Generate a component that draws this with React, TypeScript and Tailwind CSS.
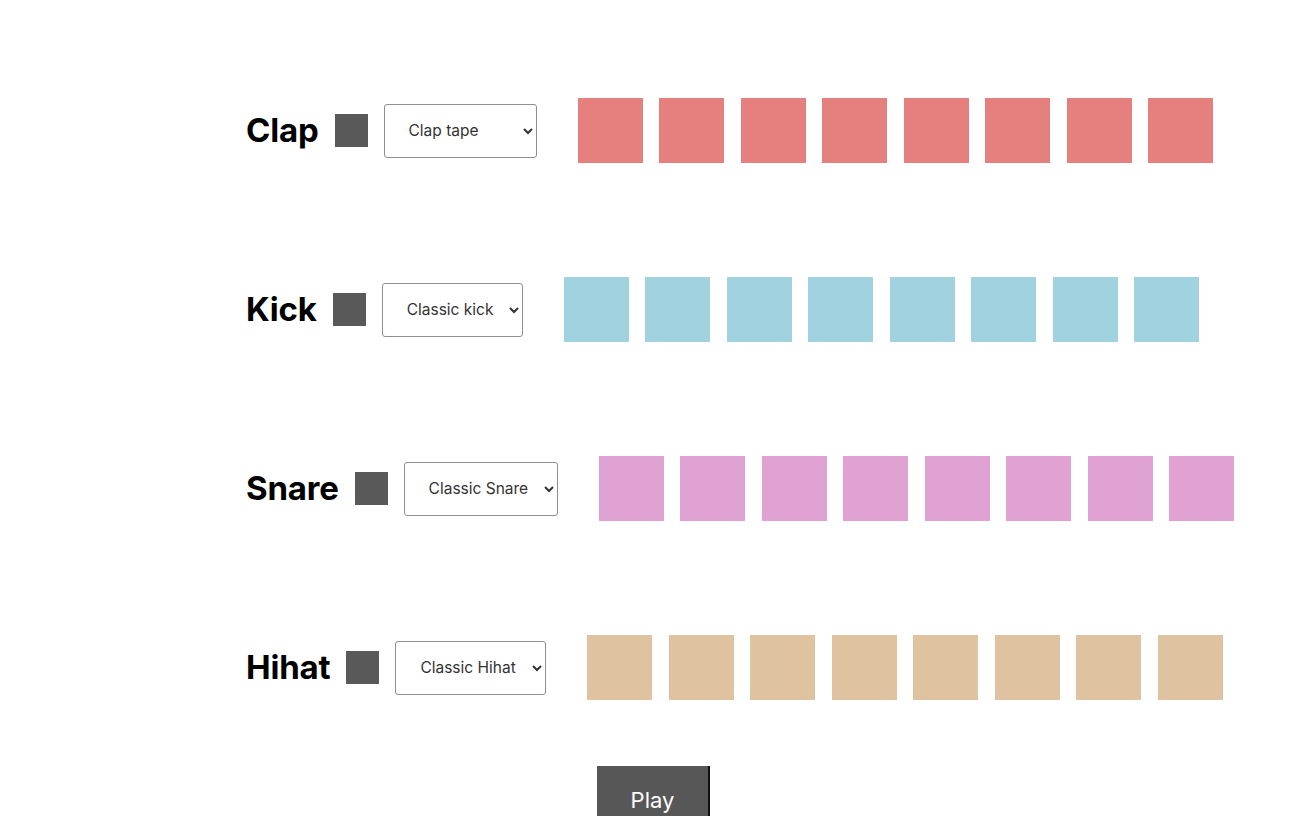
const tracks = [
  { name: 'Clap', sample: 'Clap tape', pad: 'bg-[#e6807f]', width: 'w-[153px]' },
  { name: 'Kick', sample: 'Classic kick', pad: 'bg-[#a0d3df]', width: 'w-[141px]' },
  { name: 'Snare', sample: 'Classic Snare', pad: 'bg-[#e0a2d3]', width: 'w-[154px]' },
  { name: 'Hihat', sample: 'Classic Hihat', pad: 'bg-[#dfc2a0]', width: 'w-[151px]' },
]

function Track({ name, sample, pad, width }: { name: string; sample: string; pad: string; width: string }) {
  return (
    <div className="flex items-center">
      <h2 className="text-[33px] font-bold tracking-[-0.2px] text-black leading-none">{name}</h2>
      <div className="w-[33px] h-[33px] bg-[#595959] ml-[16px]" />
      <select
        className={`ml-[16px] ${width} h-[54px] pl-[20px] pr-[10px] text-[15.5px] text-[#333] bg-white border border-[#8f8f8f] rounded-[3px]`}
        defaultValue={sample}
      >
        <option>{sample}</option>
      </select>
      <div className="flex gap-[16.5px] ml-[41px]">
        {Array.from({ length: 8 }).map((_, i) => (
          <div key={i} className={`w-[65px] h-[65px] ${pad}`} />
        ))}
      </div>
    </div>
  )
}

export default function App() {
  return (
    <div className="min-h-[816px] bg-white pl-[246px] pt-[98px] overflow-hidden font-['Inter',sans-serif]">
      <div className="flex flex-col gap-[114px]">
        {tracks.map((t) => (
          <Track key={t.name} {...t} />
        ))}
      </div>
      <button className="mt-[66px] ml-[351px] w-[113px] h-[60px] pt-[8px] bg-[#575757] text-white text-[22px] border-r-2 border-[#111]">
        Play
      </button>
    </div>
  )
}
